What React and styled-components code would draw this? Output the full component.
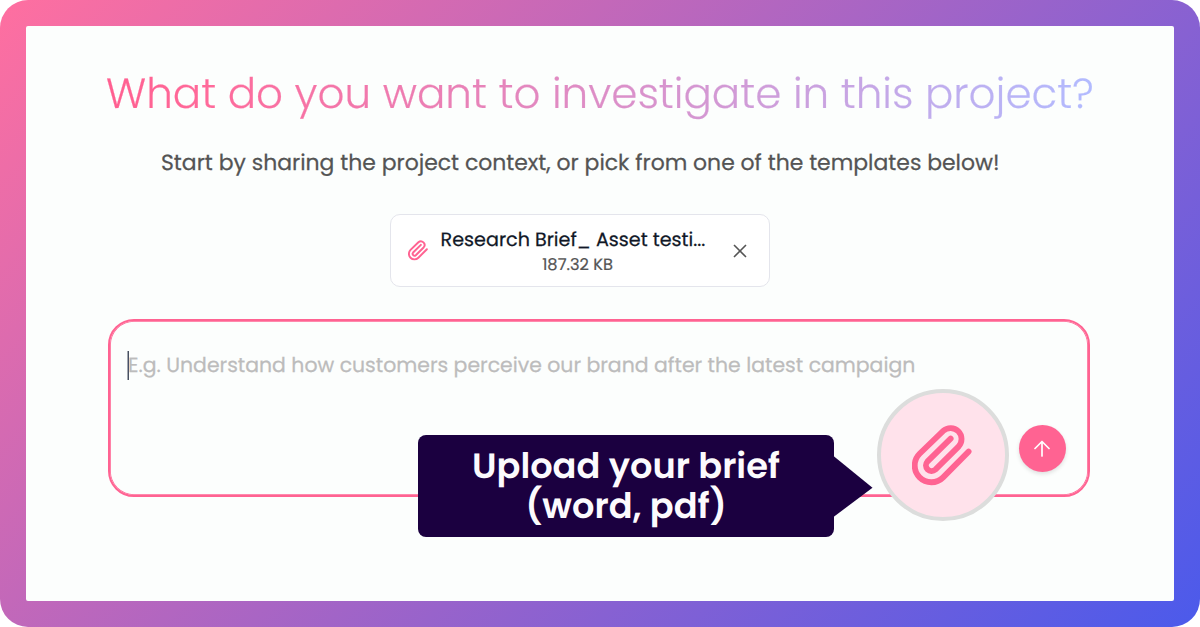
import React from 'react';
import styled, { createGlobalStyle } from 'styled-components';

const GlobalStyle = createGlobalStyle`
  * {
    box-sizing: border-box;
  }

  body {
    margin: 0;
    background: #ffffff;
    font-family: Poppins, Inter, sans-serif;
    text-rendering: geometricPrecision;
  }
`;

const Frame = styled.div`
  width: 1200px;
  height: 627px;
  padding: 26px;
  border-radius: 28px;
  background: linear-gradient(135deg, #ff6fa0 0%, #4b5aeb 100%);
`;

const Panel = styled.main`
  height: 575px;
  padding: 37px 84px 0 82px;
  border-radius: 2px;
  background: #fcfefd;
`;

const Title = styled.h1`
  width: max-content;
  height: 60px;
  margin: 0 0 0 -2px;
  font-size: 42.07px;
  font-weight: 300;
  line-height: 61px;
  white-space: nowrap;
  color: transparent;
  background: linear-gradient(90deg, #ff5f90 0%, #ff6a9a 10%, #b2bbff 100%);
  background-clip: text;
  -webkit-text-stroke: 0.2px transparent;
`;

const Subtitle = styled.p`
  height: 32px;
  margin: 24px 0 0 53px;
  font-size: 21.93px;
  line-height: 32px;
  white-space: nowrap;
  color: #545454;
  -webkit-text-stroke: 0.25px #545454;
`;

const FileCard = styled.div`
  display: flex;
  align-items: center;
  width: 380px;
  height: 73px;
  margin: 35px 0 0 282.4px;
  padding: 0 22px 0 17px;
  border: 1px solid #e4e5ec;
  border-radius: 10px;
  background: #ffffff;
`;

const FileInfo = styled.div`
  width: 274px;
  margin-left: 12.2px;
  padding-top: 1px;
  text-align: center;
  white-space: nowrap;
`;

const FileName = styled.div`
  font-size: 19.15px;
  line-height: 26px;
  text-align: left;
  color: #111827;
  -webkit-text-stroke: 0.25px #111827;
`;

const FileSize = styled.div`
  font-size: 16.3px;
  line-height: 23px;
  color: #555555;
  -webkit-text-stroke: 0.2px #555555;
`;

const CloseIcon = styled.svg`
  width: 14px;
  height: 14px;
  margin-left: 18px;
  flex: none;
`;

const Clip = styled.svg`
  width: ${props => props.$size}px;
  height: ${props => props.$size * 1.02}px;
  flex: none;
`;

const Prompt = styled.div`
  position: relative;
  width: 982px;
  height: 178px;
  margin-top: 32px;
  padding: 30px 18px;
  border: 2px solid #ff6392;
  border-radius: 26px;
  box-shadow: inset 0 0 0 0.8px #ff6392;
`;

const Placeholder = styled.div`
  display: flex;
  align-items: center;
  height: 29px;
  box-shadow: -0.5px 0 0 #485060, inset 1px 0 0 #485060;
  font-size: 20.42px;
  white-space: nowrap;
  color: #bcbcbc;
  -webkit-text-stroke: 0.25px #bcbcbc;
`;

const SendButton = styled.button`
  position: absolute;
  top: 104px;
  left: 908.5px;
  display: flex;
  align-items: center;
  justify-content: center;
  width: 47px;
  height: 47px;
  padding: 0;
  border: none;
  border-radius: 50%;
  background: #ff6392;
  box-shadow: 0 2px 4px rgba(0, 0, 0, 0.12);
`;

const UploadButton = styled.button`
  position: absolute;
  top: 68px;
  left: 767px;
  display: flex;
  align-items: center;
  justify-content: center;
  width: 132px;
  height: 132px;
  padding: 0 2px 0 0;
  border: 4px solid #dcdddc;
  border-radius: 50%;
  background: #ffe2eb;
`;

const Callout = styled.div`
  position: absolute;
  top: 114px;
  left: 308px;
  width: 416px;
  height: 102px;
  padding: 12px 0;
  border-radius: 8px;
  background: #1b0040;
  color: #fcfafd;
  font-size: 35.2px;
  font-weight: 600;
  line-height: 40px;
  text-align: center;
  white-space: nowrap;

  &::after {
    content: '';
    position: absolute;
    top: 21px;
    left: 415.5px;
    width: 39px;
    height: 61px;
    background: #1b0040;
    clip-path: polygon(0 0, 100% 52%, 0 100%);
  }
`;

const Paperclip = ({ size }) => (
  <Clip $size={size} viewBox="158 134 180 184" fill="none">
    <path
      d="M328 217L251.4 294.4A50 50 0 0 1 180.6 223.6L251.7 154.7A33 33 0 0 1 298.3 201.3L228 271A17 17 0 0 1 204 247L274 178"
      stroke="#ff6392"
      strokeWidth="17.5"
      strokeLinecap="round"
    />
  </Clip>
);

const App = () => (
  <>
    <GlobalStyle />
    <Frame>
      <Panel>
        <Title>What do you want to investigate in this project?</Title>
        <Subtitle>Start by sharing the project context, or pick from one of the templates below!</Subtitle>
        <FileCard>
          <Paperclip size={20} />
          <FileInfo>
            <FileName>Research Brief_ Asset testi...</FileName>
            <FileSize>187.32 KB</FileSize>
          </FileInfo>
          <CloseIcon viewBox="0 0 14 14">
            <path d="M1 1L13 13M13 1L1 13" stroke="#555555" strokeWidth="1.6" />
          </CloseIcon>
        </FileCard>
        <Prompt>
          <Placeholder>E.g. Understand how customers perceive our brand after the latest campaign</Placeholder>
          <Callout>
            Upload your brief
            <br />
            (word, pdf)
          </Callout>
          <UploadButton aria-label="Upload">
            <Paperclip size={60} />
          </UploadButton>
          <SendButton aria-label="Send">
            <svg width="16" height="17" viewBox="0 0 16 17" fill="none">
              <path d="M8 16V1.5M1 8.5L8 1.5L15 8.5" stroke="#ffffff" strokeWidth="1.7" strokeLinecap="round" strokeLinejoin="round" />
            </svg>
          </SendButton>
        </Prompt>
      </Panel>
    </Frame>
  </>
);

export default App;
